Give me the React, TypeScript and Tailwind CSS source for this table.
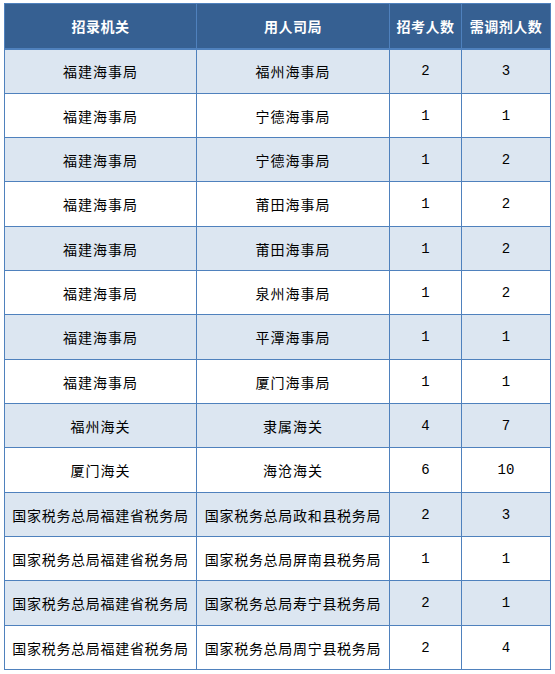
type Row = {
  org: string;
  unit: string;
  exam: number;
  adjust: number;
};

const rows: Row[] = [
  { org: '福建海事局', unit: '福州海事局', exam: 2, adjust: 3 },
  { org: '福建海事局', unit: '宁德海事局', exam: 1, adjust: 1 },
  { org: '福建海事局', unit: '宁德海事局', exam: 1, adjust: 2 },
  { org: '福建海事局', unit: '莆田海事局', exam: 1, adjust: 2 },
  { org: '福建海事局', unit: '莆田海事局', exam: 1, adjust: 2 },
  { org: '福建海事局', unit: '泉州海事局', exam: 1, adjust: 2 },
  { org: '福建海事局', unit: '平潭海事局', exam: 1, adjust: 1 },
  { org: '福建海事局', unit: '厦门海事局', exam: 1, adjust: 1 },
  { org: '福州海关', unit: '隶属海关', exam: 4, adjust: 7 },
  { org: '厦门海关', unit: '海沧海关', exam: 6, adjust: 10 },
  { org: '国家税务总局福建省税务局', unit: '国家税务总局政和县税务局', exam: 2, adjust: 3 },
  { org: '国家税务总局福建省税务局', unit: '国家税务总局屏南县税务局', exam: 1, adjust: 1 },
  { org: '国家税务总局福建省税务局', unit: '国家税务总局寿宁县税务局', exam: 2, adjust: 1 },
  { org: '国家税务总局福建省税务局', unit: '国家税务总局周宁县税务局', exam: 2, adjust: 4 },
];

const cjk = "font-['Noto_Sans_CJK_SC',sans-serif]";

function TextCell({ text }: { text: string }) {
  const size = text.length > 8 ? 'tracking-[0.7px]' : 'tracking-[1px]';
  return (
    <td className={`border border-[#4f81bd] text-center whitespace-nowrap text-black text-[14px] ${size} ${cjk}`}>
      {text}
    </td>
  );
}

function NumCell({ value }: { value: number }) {
  return (
    <td className="border border-[#4f81bd] text-center text-[14px] text-black font-['Liberation_Mono',monospace]">
      {value}
    </td>
  );
}

export default function App() {
  return (
    <div className="bg-white w-[555px] h-[674px] pl-[4px] pt-[3px]">
      <table className="border-collapse table-fixed w-[546px] leading-none">
        <colgroup>
          <col className="w-[192px]" />
          <col className="w-[193px]" />
          <col className="w-[72px]" />
          <col className="w-[89px]" />
        </colgroup>
        <thead>
          <tr className={`h-[45px] bg-[#366092] text-white font-bold text-[14px] tracking-[0.5px] ${cjk}`}>
            <th className="border border-[#4f81bd] border-b-2 whitespace-nowrap">招录机关</th>
            <th className="border border-[#4f81bd] border-b-2 whitespace-nowrap">用人司局</th>
            <th className="border border-[#4f81bd] border-b-2 whitespace-nowrap">招考人数</th>
            <th className="border border-[#4f81bd] border-b-2 whitespace-nowrap">需调剂人数</th>
          </tr>
        </thead>
        <tbody>
          {rows.map((r, i) => (
            <tr
              key={i}
              className={`${i % 3 === 0 ? 'h-[45px]' : 'h-[44px]'} ${i % 2 === 0 ? 'bg-[#dce6f1]' : 'bg-white'}`}
            >
              <TextCell text={r.org} />
              <TextCell text={r.unit} />
              <NumCell value={r.exam} />
              <NumCell value={r.adjust} />
            </tr>
          ))}
        </tbody>
      </table>
    </div>
  );
}
